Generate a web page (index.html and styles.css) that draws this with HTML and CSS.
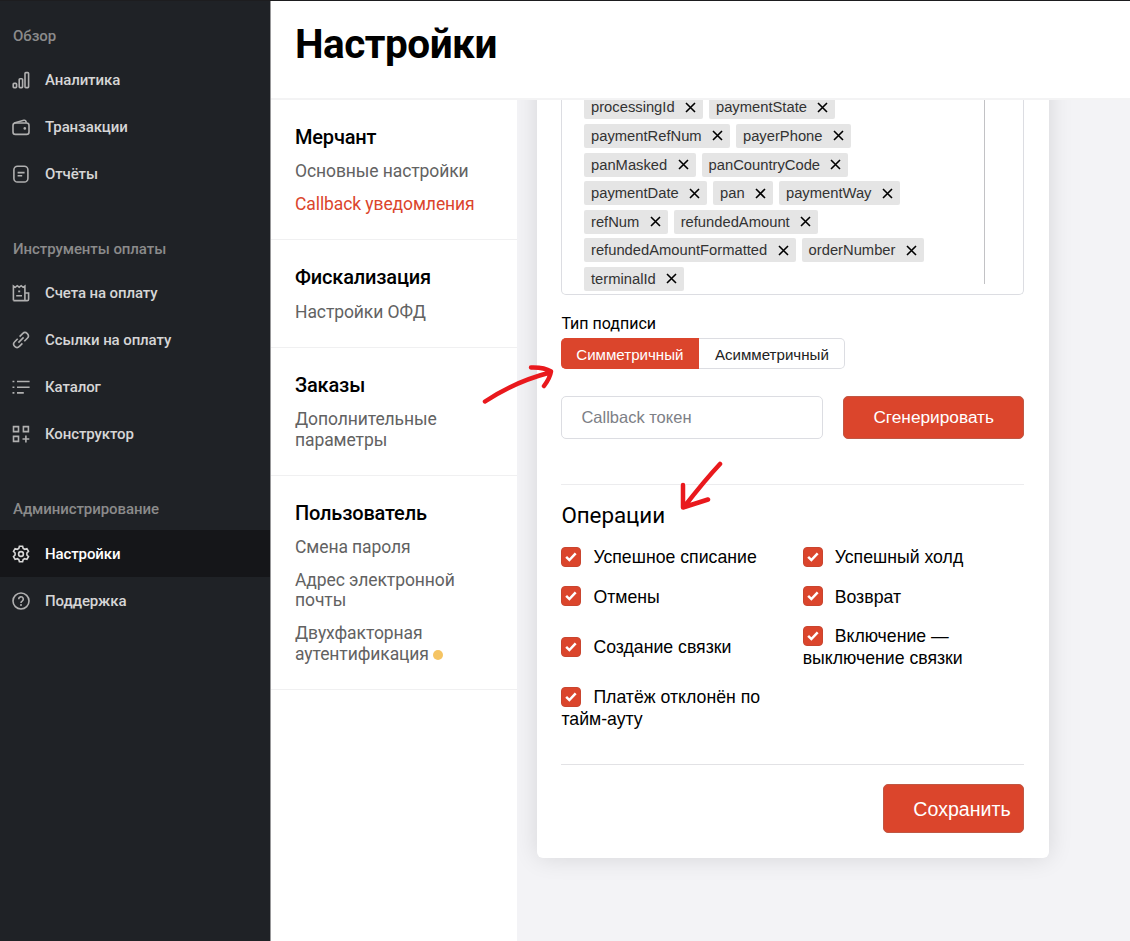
FILE: index.html
```html
<!DOCTYPE html>
<html lang="ru">
    <head>
        <meta charset="UTF-8" />
        <meta name="viewport" content="width=device-width, initial-scale=1.0" />
        <title>Настройки</title>
        <link rel="stylesheet" href="styles.css">
    </head>
    <body>
        <aside class="sidebar">
            <nav class="menu">
                <div class="menu-title">Обзор</div>
                <a class="menu-item">
                    <svg class="icon" viewBox="0 0 18 18"><rect x="1.2" y="12.4" width="3.4" height="4.2" rx=".8" /><rect x="7.2" y="7.8" width="3.4" height="8.8" rx=".8" /><rect x="13" y="1.6" width="3.6" height="15" rx=".8" /></svg>
                    <span>Аналитика</span>
                </a>
                <a class="menu-item">
                    <svg class="icon" viewBox="0 0 18 18"><rect x="1" y="5" width="16" height="11.4" rx="2.4" /><path d="M2.2 5 11.8 2.3q1.8-.4 2.2 1.2l.3 1.3" /><circle class="fill" cx="12.8" cy="10.4" r="1.3" /></svg>
                    <span>Транзакции</span>
                </a>
                <a class="menu-item">
                    <svg class="icon" viewBox="0 0 18 18"><rect x="1.9" y="1.2" width="14" height="15.8" rx="3.6" /><path d="M5.6 7.6h7M5.6 10.7h4.6" /></svg>
                    <span>Отчёты</span>
                </a>
            </nav>
            <nav class="menu">
                <div class="menu-title">Инструменты оплаты</div>
                <a class="menu-item">
                    <svg class="icon" viewBox="0 0 18 18"><path d="M1.4 16.6V2l1.9 1.3L5.2 1.7l2 1.5 2-1.5 1.9 1.6L12.9 2v14.6M12.9 9h3.7v6.2q0 1.4-1.4 1.4H1.4M6.2 7.4h2M4.2 11.8h5.8" /></svg>
                    <span>Счета на оплату</span>
                </a>
                <a class="menu-item">
                    <svg class="icon" viewBox="0 0 18 18"><path d="M7.6 5.6l3-3a3.3 3.3 0 0 1 4.7 4.7l-3 3M10.4 12.4l-3 3a3.3 3.3 0 0 1-4.7-4.7l3-3M6.4 11.6l5.2-5.2" /></svg>
                    <span>Ссылки на оплату</span>
                </a>
                <a class="menu-item">
                    <svg class="icon" viewBox="0 0 18 18"><path d="M5 3.5H17.6M5 9.2H17.6M5 14.9h6.8M.5 3.5h1.9M.5 9.2h1.9M.5 14.9h1.9" /></svg>
                    <span>Каталог</span>
                </a>
                <a class="menu-item">
                    <svg class="icon" viewBox="0 0 18 18"><path d="M1.5 1.6h5v5h-5zM11.4 1.6h5v5h-5zM1.5 11.4h5v5h-5zM13.9 10.6v6.8M10.5 14h6.8" /></svg>
                    <span>Конструктор</span>
                </a>
            </nav>
            <nav class="menu">
                <div class="menu-title">Администрирование</div>
                <a class="menu-item active">
                    <svg class="icon" viewBox="0 0 18 18"><path d="M7.4 1.2h3.2l.6 2.2 1.5.9 2.2-.7 1.6 2.8-1.6 1.6v2l1.6 1.6-1.6 2.8-2.2-.7-1.5.9-.6 2.2H7.4l-.6-2.2-1.5-.9-2.2.7-1.6-2.8L3.1 10V8L1.5 6.4l1.6-2.8 2.2.7 1.5-.9z" /><circle cx="9" cy="9" r="2.4" /></svg>
                    <span>Настройки</span>
                </a>
                <a class="menu-item">
                    <svg class="icon" viewBox="0 0 18 18"><circle cx="9" cy="9" r="8" /><path d="M6.7 7.2a2.3 2.3 0 1 1 3.5 1.9Q9 9.8 9 10.9" /><circle class="fill" cx="9" cy="13" r="1" /></svg>
                    <span>Поддержка</span>
                </a>
            </nav>
        </aside>

        <main class="page">
            <header class="page-header">
                <h1>Настройки</h1>
            </header>
            <div class="page-body">
                <div class="subnav">
                    <section class="group">
                        <h2>Мерчант</h2>
                        <a>Основные настройки</a>
                        <a class="current">Callback уведомления</a>
                    </section>
                    <section class="group">
                        <h2>Фискализация</h2>
                        <a>Настройки ОФД</a>
                    </section>
                    <section class="group">
                        <h2>Заказы</h2>
                        <a>Дополнительные<br>параметры</a>
                    </section>
                    <section class="group">
                        <h2>Пользователь</h2>
                        <a>Смена пароля</a>
                        <a>Адрес электронной<br>почты</a>
                        <a>Двухфакторная<br>аутентификация<i class="dot"></i></a>
                    </section>
                </div>

                <div class="content">
                    <form class="card">
                        <div class="params">
                            <div class="chips">
                                <span class="chip">processingId<svg viewBox="0 0 11 11"><path d="M1 1l9 9M10 1l-9 9" /></svg></span>
                                <span class="chip">paymentState<svg viewBox="0 0 11 11"><path d="M1 1l9 9M10 1l-9 9" /></svg></span>
                                <span class="chip">paymentRefNum<svg viewBox="0 0 11 11"><path d="M1 1l9 9M10 1l-9 9" /></svg></span>
                                <span class="chip">payerPhone<svg viewBox="0 0 11 11"><path d="M1 1l9 9M10 1l-9 9" /></svg></span>
                                <span class="chip">panMasked<svg viewBox="0 0 11 11"><path d="M1 1l9 9M10 1l-9 9" /></svg></span>
                                <span class="chip">panCountryCode<svg viewBox="0 0 11 11"><path d="M1 1l9 9M10 1l-9 9" /></svg></span>
                                <span class="chip">paymentDate<svg viewBox="0 0 11 11"><path d="M1 1l9 9M10 1l-9 9" /></svg></span>
                                <span class="chip">pan<svg viewBox="0 0 11 11"><path d="M1 1l9 9M10 1l-9 9" /></svg></span>
                                <span class="chip">paymentWay<svg viewBox="0 0 11 11"><path d="M1 1l9 9M10 1l-9 9" /></svg></span>
                                <span class="chip">refNum<svg viewBox="0 0 11 11"><path d="M1 1l9 9M10 1l-9 9" /></svg></span>
                                <span class="chip">refundedAmount<svg viewBox="0 0 11 11"><path d="M1 1l9 9M10 1l-9 9" /></svg></span>
                                <span class="chip">refundedAmountFormatted<svg viewBox="0 0 11 11"><path d="M1 1l9 9M10 1l-9 9" /></svg></span>
                                <span class="chip">orderNumber<svg viewBox="0 0 11 11"><path d="M1 1l9 9M10 1l-9 9" /></svg></span>
                                <span class="chip">terminalId<svg viewBox="0 0 11 11"><path d="M1 1l9 9M10 1l-9 9" /></svg></span>
                            </div>
                        </div>

                        <div class="label">Тип подписи</div>
                        <div class="switch">
                            <button type="button" class="on">Симметричный</button>
                            <button type="button">Асимметричный</button>
                        </div>

                        <div class="token">
                            <input type="text" placeholder="Callback токен">
                            <button type="button" class="btn">Сгенерировать</button>
                        </div>

                        <h3>Операции</h3>
                        <div class="operations">
                            <label><svg class="check" viewBox="0 0 20 20"><path d="M4.6 9.8l3.6 3.6 7-7.4" /></svg>Успешное списание</label>
                            <label><svg class="check" viewBox="0 0 20 20"><path d="M4.6 9.8l3.6 3.6 7-7.4" /></svg>Успешный холд</label>
                            <label><svg class="check" viewBox="0 0 20 20"><path d="M4.6 9.8l3.6 3.6 7-7.4" /></svg>Отмены</label>
                            <label><svg class="check" viewBox="0 0 20 20"><path d="M4.6 9.8l3.6 3.6 7-7.4" /></svg>Возврат</label>
                            <label><svg class="check" viewBox="0 0 20 20"><path d="M4.6 9.8l3.6 3.6 7-7.4" /></svg>Создание связки</label>
                            <label><svg class="check" viewBox="0 0 20 20"><path d="M4.6 9.8l3.6 3.6 7-7.4" /></svg>Включение —<br>выключение связки</label>
                            <label><svg class="check" viewBox="0 0 20 20"><path d="M4.6 9.8l3.6 3.6 7-7.4" /></svg>Платёж отклонён по<br>тайм-ауту</label>
                        </div>

                        <div class="actions">
                            <button type="button" class="btn save">Сохранить</button>
                        </div>
                    </form>
                </div>
            </div>
        </main>

        <svg class="arrows" viewBox="0 0 1130 941">
            <path d="M485 401.5Q514 382 550 372.5M531 367.5Q544 367 551 371.5Q550 378 544 386" />
            <path d="M720 464Q705 480 684 507M683 485V507.5L708 499.5" />
        </svg>
    </body>
</html>
```

FILE: styles.css
```css
* {
    box-sizing: border-box;
}

body {
    display: flex;
    height: 941px;
    margin: 0;
    overflow: hidden;
    border-top: 1px solid #1d1d1f;
    background: #f3f3f6;
    color: #000;
    font-family: Roboto, sans-serif;
}

h1,
h2,
h3 {
    margin: 0;
}

button,
input {
    font-family: "Liberation Sans", Arial, sans-serif;
}

/* sidebar */
.sidebar {
    flex: 0 0 270px;
    padding-top: 12.5px;
    background: #1f2226;
}

.menu {
    margin-bottom: 29.25px;
}

.menu-title {
    height: 43px;
    padding-left: 13px;
    color: #8b8b8b;
    font-size: 15px;
    font-weight: 500;
    line-height: 45px;
    letter-spacing: -0.07px;
}

.menu-item {
    display: flex;
    align-items: center;
    gap: 15px;
    height: 47px;
    padding-left: 12px;
    color: #d6d6d6;
    font-size: 15px;
    font-weight: 500;
    letter-spacing: -0.1px;
}

.menu-item.active {
    background: #151619;
    color: #fff;
}

.icon {
    width: 18px;
    height: 18px;
    fill: none;
    stroke: #b0b0b0;
    stroke-width: 1.6;
}

.active .icon {
    stroke: #d8d8d8;
}

.icon .fill {
    fill: #b0b0b0;
    stroke: none;
}

/* page */
.page {
    display: flex;
    flex: 1;
    flex-direction: column;
    border-left: 1px solid #98989a;
}

.page-header {
    flex: 0 0 99px;
    padding: 18px 24px;
    border-bottom: 2px solid #f3f3f4;
    background: #fff;
}

h1 {
    font-size: 40.5px;
    line-height: 50px;
    letter-spacing: -0.5px;
}

.page-body {
    display: flex;
    flex: 1;
    min-height: 0;
}

.subnav {
    flex: 0 0 246px;
    background: #fff;
}

.group {
    padding: 25.2px 24px 24.5px;
    border-bottom: 1px solid #f0f0f1;
}

.group h2 {
    margin-bottom: 12.25px;
    font-size: 20px;
    font-weight: 500;
    line-height: 24px;
    letter-spacing: -0.17px;
}

.group a {
    display: block;
    color: #626262;
    font-size: 17.5px;
    line-height: 20.5px;
    letter-spacing: -0.09px;
}

.group a + a {
    margin-top: 12.3px;
}

.group .current {
    color: #db452c;
}

.dot {
    display: inline-block;
    width: 10px;
    height: 10px;
    margin-left: 4px;
    border-radius: 50%;
    background: #f5c463;
}

.content {
    display: flex;
    flex: 1;
    flex-direction: column;
    justify-content: flex-end;
    padding: 0 81px 83px 20px;
    overflow: hidden;
}

.card {
    padding: 0 25px 25px 24.4px;
    border-radius: 6px;
    background: #fff;
    box-shadow: 0 0 24px rgba(0, 0, 0, 0.12);
}

.params {
    padding: 24px 38px 10px 21.6px;
    border: 1px solid #dcdde2;
    border-top: 0;
    border-radius: 5px;
}

.chips {
    display: flex;
    flex-wrap: wrap;
    gap: 4.6px 6px;
    padding: 10px 39px 0 0;
    border-right: 1px solid #c2c2c5;
}

.chip {
    display: flex;
    align-items: center;
    height: 24px;
    padding: 0 7px;
    border-radius: 2px;
    background: #e5e5e5;
    color: #333;
    font-family: "Liberation Sans", Arial, sans-serif;
    font-size: 14.75px;
}

/* the last row hangs below the divider */
.chip:last-child {
    margin-bottom: -7px;
}

.chip svg {
    width: 11px;
    height: 11px;
    margin-left: 10.3px;
    fill: none;
    stroke: #000;
    stroke-width: 1.6;
}

.label {
    margin-top: 18px;
    font-size: 16px;
    line-height: 22px;
}

.switch {
    display: flex;
    width: 284px;
    height: 31px;
    margin-top: 3px;
}

.switch button {
    flex: 1 1 146px;
    padding: 3px 0 0;
    border: 1px solid #dcdde2;
    border-left: 0;
    border-radius: 0 5px 5px 0;
    background: #fff;
    color: #222;
    font-size: 15.1px;
}

.switch .on {
    flex: 0 0 138px;
    border-color: #db452c;
    border-radius: 5px 0 0 5px;
    background: #db452c;
    color: #fff;
}

.token {
    display: flex;
    gap: 20px;
    margin-top: 27px;
    padding-bottom: 45px;
    border-bottom: 1px solid #ececee;
}

.token input {
    width: 262px;
    height: 43px;
    padding: 0 19px;
    border: 1px solid #dcdde2;
    border-radius: 5px;
    font-size: 16.5px;
}

.token input::placeholder {
    color: #7d8086;
}

.btn {
    flex: 1;
    border: 1px solid #c05743;
    border-radius: 5px;
    background: #db452c;
    color: #fff;
    font-size: 17.25px;
}

h3 {
    margin: 16px 0 18.2px;
    font-size: 22.4px;
    font-weight: 400;
    line-height: 28px;
    letter-spacing: -0.05px;
}

.operations {
    display: grid;
    grid-template-columns: 1fr 1fr;
    align-items: center;
    row-gap: 17.7px;
    column-gap: 20px;
    padding-bottom: 33.6px;
    border-bottom: 1px solid #e2e2e5;
    font-family: "Liberation Sans", Arial, sans-serif;
    font-size: 17.7px;
    line-height: 21.7px;
}

.check {
    width: 20px;
    height: 20px;
    margin: -3px 12px 0 0;
    border: 1px solid #c9452f;
    border-radius: 4px;
    background: #db452c;
    vertical-align: middle;
    fill: none;
    stroke: #fff;
    stroke-width: 2.8;
}

.actions {
    display: flex;
    justify-content: flex-end;
    padding-top: 19px;
}

.save {
    flex: 0 0 141px;
    height: 49px;
    padding: 2px 12px 0 29px;
    font-size: 19.6px;
}

/* hand-drawn hints */
.arrows {
    position: absolute;
    top: 0;
    left: 0;
    width: 1130px;
    height: 941px;
    fill: none;
    stroke: #e9191d;
    stroke-width: 4.5;
    stroke-linecap: round;
    stroke-linejoin: round;
    pointer-events: none;
}
```
